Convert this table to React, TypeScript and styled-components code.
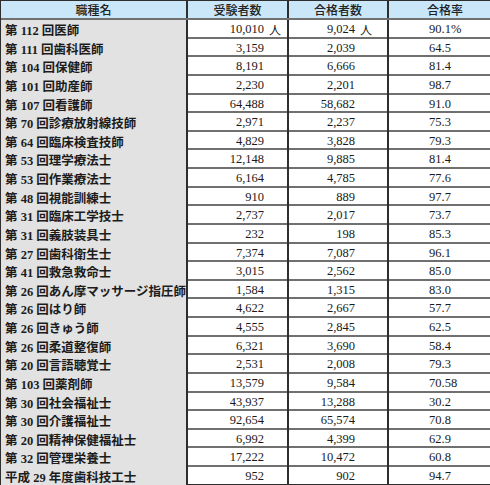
import React from "react";
import styled, { createGlobalStyle } from "styled-components";

const GlobalStyle = createGlobalStyle`
  html, body {
    margin: 0;
    padding: 0;
    background: #ffffff;
    overflow: hidden;
  }
`;

const serif = `"Liberation Serif", "Noto Sans CJK JP", serif`;
const columns = "185px 101px 100px 110px";

const Table = styled.div`
  width: 497px;
  border: 1px solid #2e2e2e;
  border-right: none;
  box-sizing: border-box;
  font-family: ${serif};
  color: #1a1a1a;
`;

const HeaderRow = styled.div`
  display: grid;
  grid-template-columns: ${columns};
  height: 17px;
  background: #c9e7f8;
`;

const Row = styled.div`
  display: grid;
  grid-template-columns: ${columns};
  height: 18.63px;
  box-sizing: border-box;
  border-top: 2px solid #707070;
`;

const HeadCell = styled.div<{ $first?: boolean }>`
  display: flex;
  align-items: center;
  justify-content: center;
  border-left: ${(p) => (p.$first ? "none" : "2px solid #2e2e2e")};
  font-family: "Noto Sans CJK JP", sans-serif;
  font-size: 12px;
  font-weight: 500;
  color: #222;
`;

const RateHead = styled(HeadCell)`
  justify-content: flex-start;
  padding-left: 38px;
`;

const NameCell = styled.div`
  display: flex;
  align-items: center;
  padding-left: 4px;
  background: #e2e2e2;
  font-size: 12.5px;
  font-weight: 700;
  white-space: nowrap;
  color: #1c1c1c;
`;

const NumCell = styled.div<{ $pad: number }>`
  display: flex;
  align-items: center;
  justify-content: flex-end;
  padding-right: ${(p) => p.$pad}px;
  border-left: 2px solid #2e2e2e;
  font-size: 12.5px;
`;

const Unit = styled.span`
  display: inline-block;
  width: 18px;
  padding-left: 5px;
  box-sizing: border-box;
  font-family: "Noto Sans CJK JP", sans-serif;
  font-size: 12px;
`;

const RateCell = styled.div`
  display: flex;
  align-items: center;
  padding-left: 40px;
  border-left: 2px solid #2e2e2e;
  font-size: 12.5px;
`;

type Item = [string, string, string, string];

const rows: Item[] = [
  ["第 112 回医師", "10,010", "9,024", "90.1%"],
  ["第 111 回歯科医師", "3,159", "2,039", "64.5"],
  ["第 104 回保健師", "8,191", "6,666", "81.4"],
  ["第 101 回助産師", "2,230", "2,201", "98.7"],
  ["第 107 回看護師", "64,488", "58,682", "91.0"],
  ["第 70 回診療放射線技師", "2,971", "2,237", "75.3"],
  ["第 64 回臨床検査技師", "4,829", "3,828", "79.3"],
  ["第 53 回理学療法士", "12,148", "9,885", "81.4"],
  ["第 53 回作業療法士", "6,164", "4,785", "77.6"],
  ["第 48 回視能訓練士", "910", "889", "97.7"],
  ["第 31 回臨床工学技士", "2,737", "2,017", "73.7"],
  ["第 31 回義肢装具士", "232", "198", "85.3"],
  ["第 27 回歯科衛生士", "7,374", "7,087", "96.1"],
  ["第 41 回救急救命士", "3,015", "2,562", "85.0"],
  ["第 26 回あん摩マッサージ指圧師", "1,584", "1,315", "83.0"],
  ["第 26 回はり師", "4,622", "2,667", "57.7"],
  ["第 26 回きゅう師", "4,555", "2,845", "62.5"],
  ["第 26 回柔道整復師", "6,321", "3,690", "58.4"],
  ["第 20 回言語聴覚士", "2,531", "2,008", "79.3"],
  ["第 103 回薬剤師", "13,579", "9,584", "70.58"],
  ["第 30 回社会福祉士", "43,937", "13,288", "30.2"],
  ["第 30 回介護福祉士", "92,654", "65,574", "70.8"],
  ["第 20 回精神保健福祉士", "6,992", "4,399", "62.9"],
  ["第 32 回管理栄養士", "17,222", "10,472", "60.8"],
  ["平成 29 年度歯科技工士", "952", "902", "94.7"],
];

export default function App() {
  return (
    <>
      <GlobalStyle />
      <Table>
        <HeaderRow>
          <HeadCell $first>職種名</HeadCell>
          <HeadCell>受験者数</HeadCell>
          <HeadCell>合格者数</HeadCell>
          <RateHead>合格率</RateHead>
        </HeaderRow>
        {rows.map(([name, takers, passed, rate], i) => (
          <Row key={name}>
            <NameCell>{name}</NameCell>
            <NumCell $pad={5}>
              {takers}
              <Unit>{i === 0 ? "人" : ""}</Unit>
            </NumCell>
            <NumCell $pad={14}>
              {passed}
              <Unit>{i === 0 ? "人" : ""}</Unit>
            </NumCell>
            <RateCell>{rate}</RateCell>
          </Row>
        ))}
      </Table>
    </>
  );
}
